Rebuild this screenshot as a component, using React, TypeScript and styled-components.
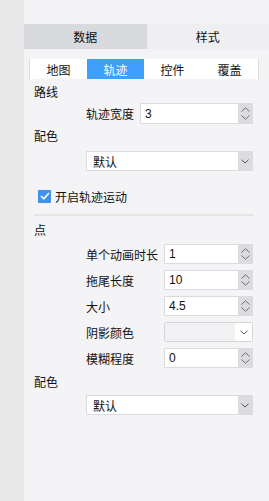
import styled, { createGlobalStyle } from 'styled-components';

const GlobalStyle = createGlobalStyle`
  html, body {
    margin: 0;
    padding: 0;
    background: #f4f4f6;
  }
  body {
    font-family: "Noto Sans CJK SC", "Noto Sans", sans-serif;
    font-size: 12px;
    color: #111;
  }
`;

const Page = styled.div`
  display: flex;
  width: 269px;
  height: 501px;
  overflow: hidden;
`;

const SideStrip = styled.div`
  width: 24px;
  flex-shrink: 0;
  background: #e8e8e8;
`;

const Panel = styled.div`
  flex: 1;
  display: flex;
  flex-direction: column;
  background: #f4f4f6;
  padding-top: 24px;
`;

const MainTabs = styled.div`
  display: flex;
  height: 25px;
`;

const MainTab = styled.div<{ $active?: boolean }>`
  flex: 1;
  display: flex;
  align-items: center;
  justify-content: center;
  font-size: 12px;
  background: ${(p) => (p.$active ? '#d9dadd' : '#efeff1')};
`;

const SubTabs = styled.div`
  display: flex;
  height: 20px;
  margin: 10px 10px 0 5px;
  background: #fff;
  border-left: 1px solid #dcdcdc;
  border-right: 1px solid #dcdcdc;
`;

const SubTab = styled.div<{ $active?: boolean }>`
  flex: 1;
  display: flex;
  align-items: center;
  justify-content: center;
  background: ${(p) => (p.$active ? '#409eff' : '#fff')};
  color: ${(p) => (p.$active ? '#fff' : '#111')};
`;

const Body = styled.div`
  display: flex;
  flex-direction: column;
  padding: 0 16px 0 10px;
`;

const Title = styled.div<{ $top: number }>`
  height: 20px;
  line-height: 20px;
  margin-top: ${(p) => p.$top}px;
`;

const Row = styled.div<{ $top: number; $h?: number }>`
  display: flex;
  align-items: center;
  height: ${(p) => p.$h ?? 20}px;
  margin-top: ${(p) => p.$top}px;
  padding-left: 52px;
  gap: 6px;
`;

const Label = styled.span<{ $w: number }>`
  width: ${(p) => p.$w}px;
  flex-shrink: 0;
  white-space: nowrap;
`;

const NumberBox = styled.div<{ $h?: number }>`
  flex: 1;
  display: flex;
  height: ${(p) => p.$h ?? 20}px;
  box-sizing: border-box;
  border: 1px solid #dcdcdf;
  background: #fff;
`;

const NumberValue = styled.span`
  flex: 1;
  display: flex;
  align-items: center;
  padding-left: 4px;
  font-family: "Liberation Sans", Arial, sans-serif;
  font-size: 12px;
  color: #111;
`;

const Spinner = styled.div`
  width: 14px;
  display: flex;
  flex-direction: column;
  align-items: center;
  justify-content: space-evenly;
  background: #dcdcdf;
`;

const SelectBox = styled.div<{ $muted?: boolean }>`
  flex: 1;
  display: flex;
  height: 20px;
  box-sizing: border-box;
  border: 1px solid ${(p) => (p.$muted ? '#d6d6d8' : '#dcdcdf')};
  border-radius: ${(p) => (p.$muted ? '2px' : '0')};
  background: ${(p) => (p.$muted ? '#f2f2f4' : '#fff')};
`;

const SelectText = styled.span`
  flex: 1;
  display: flex;
  align-items: center;
  padding-left: 6px;
`;

const Arrow = styled.div<{ $light?: boolean }>`
  width: ${(p) => (p.$light ? 17 : 14)}px;
  display: flex;
  align-items: center;
  justify-content: center;
  background: ${(p) => (p.$light ? '#fff' : '#dcdcdf')};
`;

const CheckRow = styled.label`
  display: flex;
  align-items: center;
  gap: 4px;
  height: 20px;
  margin-top: 15px;
  padding-left: 4px;
`;

const CheckMark = styled.span`
  width: 13px;
  height: 13px;
  display: flex;
  align-items: center;
  justify-content: center;
  background: #3f92ee;
  border-radius: 1px;
`;

const Divider = styled.div`
  height: 2px;
  margin-top: 8px;
  background: #e4e4e0;
`;

const Up = () => (
  <svg width="9" height="5" viewBox="0 0 9 5">
    <polyline points="0.5,4.5 4.5,0.8 8.5,4.5" fill="none" stroke="#6f6f6f" strokeWidth="1" />
  </svg>
);

const Down = () => (
  <svg width="9" height="5" viewBox="0 0 9 5">
    <polyline points="0.5,0.5 4.5,4.2 8.5,0.5" fill="none" stroke="#6f6f6f" strokeWidth="1" />
  </svg>
);

const SmallDown = () => (
  <svg width="8" height="5" viewBox="0 0 8 5">
    <polyline points="0.5,0.8 4,4 7.5,0.8" fill="none" stroke="#555" strokeWidth="1" />
  </svg>
);

const NumberField = ({ value, h }: { value: string; h?: number }) => (
  <NumberBox $h={h}>
    <NumberValue>{value}</NumberValue>
    <Spinner>
      <Up />
      <Down />
    </Spinner>
  </NumberBox>
);

const Select = ({ value }: { value: string }) => (
  <SelectBox>
    <SelectText>{value}</SelectText>
    <Arrow>
      <SmallDown />
    </Arrow>
  </SelectBox>
);

const App = () => {
  return (
    <Page>
      <GlobalStyle />
      <SideStrip />
      <Panel>
        <MainTabs>
          <MainTab $active>数据</MainTab>
          <MainTab>样式</MainTab>
        </MainTabs>
        <SubTabs>
          <SubTab>地图</SubTab>
          <SubTab $active>轨迹</SubTab>
          <SubTab>控件</SubTab>
          <SubTab>覆盖</SubTab>
        </SubTabs>
        <Body>
          <Title $top={3}>路线</Title>
          <Row $top={1} $h={21}>
            <Label $w={48}>轨迹宽度</Label>
            <NumberField value="3" h={21} />
          </Row>
          <Title $top={2}>配色</Title>
          <Row $top={5}>
            <Select value="默认" />
          </Row>

          <CheckRow>
            <CheckMark>
              <svg width="10" height="8" viewBox="0 0 10 8">
                <polyline points="1,4 3.8,6.8 9,1" fill="none" stroke="#fff" strokeWidth="1.6" />
              </svg>
            </CheckMark>
            开启轨迹运动
          </CheckRow>
          <Divider />

          <Title $top={4}>点</Title>
          <Row $top={4}>
            <Label $w={72}>单个动画时长</Label>
            <NumberField value="1" />
          </Row>
          <Row $top={6}>
            <Label $w={72}>拖尾长度</Label>
            <NumberField value="10" />
          </Row>
          <Row $top={6}>
            <Label $w={72}>大小</Label>
            <NumberField value="4.5" />
          </Row>
          <Row $top={6}>
            <Label $w={72}>阴影颜色</Label>
            <SelectBox $muted>
              <SelectText />
              <Arrow $light>
                <SmallDown />
              </Arrow>
            </SelectBox>
          </Row>
          <Row $top={6}>
            <Label $w={72}>模糊程度</Label>
            <NumberField value="0" />
          </Row>
          <Title $top={4}>配色</Title>
          <Row $top={3}>
            <Select value="默认" />
          </Row>
        </Body>
      </Panel>
    </Page>
  );
};

export default App;
